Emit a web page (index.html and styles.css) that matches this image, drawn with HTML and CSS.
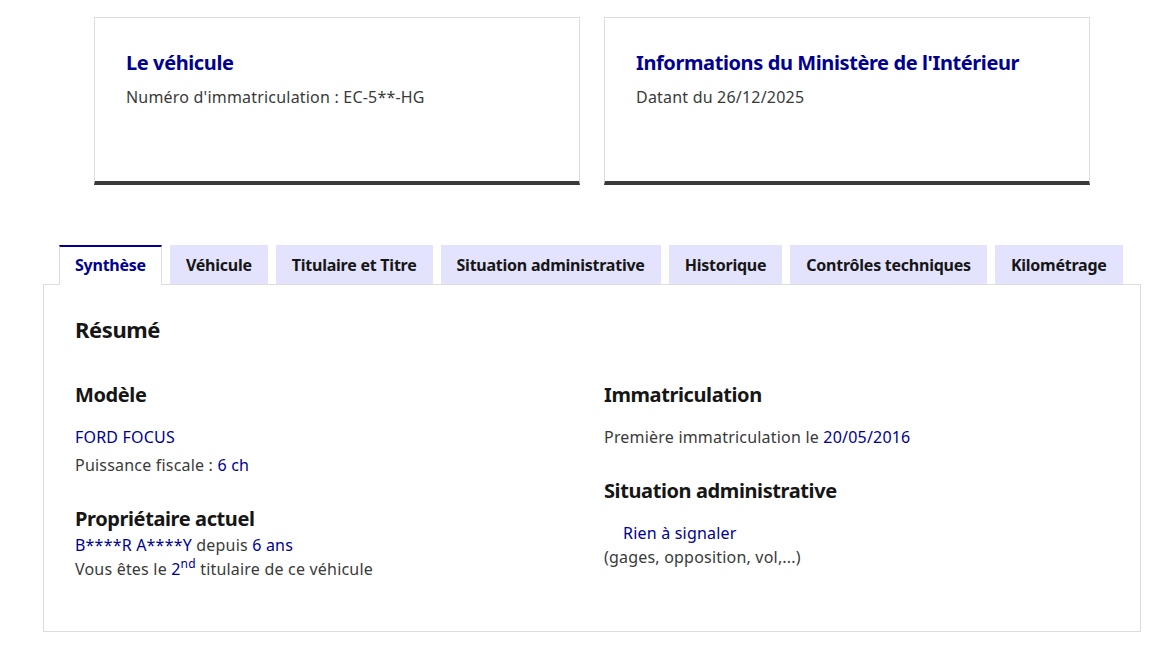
FILE: index.html
```html
<!DOCTYPE html>
<html lang="fr">
<head>
<meta charset="utf-8">
<title>Historique du véhicule</title>
<link rel="stylesheet" href="styles.css">
</head>
<body>
<main class="page">
  <section class="cards">
    <article class="card">
      <h2 class="card-title">Le véhicule</h2>
      <p class="card-text">Numéro d'immatriculation : EC-5**-HG</p>
    </article>
    <article class="card">
      <h2 class="card-title">Informations du Ministère de l'Intérieur</h2>
      <p class="card-text">Datant du 26/12/2025</p>
    </article>
  </section>

  <section class="tabs">
    <ul class="tab-list">
      <li class="tab tab-selected">Synthèse</li>
      <li class="tab">Véhicule</li>
      <li class="tab">Titulaire et Titre</li>
      <li class="tab">Situation administrative</li>
      <li class="tab">Historique</li>
      <li class="tab">Contrôles techniques</li>
      <li class="tab">Kilométrage</li>
    </ul>
    <div class="panel">
      <h2 class="panel-title">Résumé</h2>
      <div class="grid">
        <div class="col">
          <h3 class="h3">Modèle</h3>
          <p class="line blue first">FORD FOCUS</p>
          <p class="line">Puissance fiscale : <span class="blue">6 ch</span></p>
          <h3 class="h3 h3-gap">Propriétaire actuel</h3>
          <p class="line-24"><span class="blue">B****R A****Y</span> depuis <span class="blue">6 ans</span></p>
          <p class="line-24">Vous êtes le <span class="blue">2<sup class="sup">nd</sup></span> titulaire de ce véhicule</p>
        </div>
        <div class="col">
          <h3 class="h3">Immatriculation</h3>
          <p class="line first">Première immatriculation le <span class="blue">20/05/2016</span></p>
          <h3 class="h3 h3-gap">Situation administrative</h3>
          <p class="line-24 blue indent first">Rien à signaler</p>
          <p class="line-24">(gages, opposition, vol,...)</p>
        </div>
      </div>
    </div>
  </section>
</main>
</body>
</html>
```

FILE: styles.css
```css
* { box-sizing: border-box; }
html, body { margin: 0; padding: 0; background: #fff; }
body {
  font-family: "Noto Sans", "Open Sans", sans-serif;
  color: #3a3a3a;
  font-size: 16px;
  line-height: 24px;
  letter-spacing: 0.2px;
}
.page { padding-top: 17px; }
h2, h3, p, ul { margin: 0; padding: 0; }
h2, h3 { letter-spacing: -0.4px; }

.cards {
  display: flex;
  gap: 24px;
  margin-left: 94px;
  width: 996px;
}
.card {
  flex: 1;
  height: 168px;
  border: 1px solid #dddddd;
  border-bottom: 4px solid #3a3a3a;
  padding: 31px 31px 0;
}
.card-title {
  font-size: 20px;
  line-height: 28px;
  font-weight: 700;
  color: #000091;
}
.card-text { margin-top: 8px; color: #3a3a3a; }

.tabs {
  margin-top: 60px;
  margin-left: 43px;
  width: 1098px;
}
.tab-list {
  list-style: none;
  display: flex;
  gap: 8px;
  padding-left: 16px;
  position: relative;
  z-index: 1;
}
.tab {
  background: #e3e3fd;
  color: #161616;
  font-weight: 700;
  letter-spacing: -0.24px;
  white-space: nowrap;
  padding: 8px 16px 7px;
  line-height: 24px;
  height: 39px;
}
.tab-selected {
  background: #fff;
  color: #000091;
  border-top: 2px solid #000091;
  border-left: 1px solid #dddddd;
  border-right: 1px solid #dddddd;
  padding: 6px 15px 8px;
  height: 40px;
  margin-bottom: -1px;
}
.panel {
  border: 1px solid #dddddd;
  padding: 30px 31px 0;
  height: 348px;
}
.panel-title {
  font-size: 22px;
  line-height: 28px;
  font-weight: 700;
  color: #161616;
}
.grid {
  display: grid;
  grid-template-columns: 1fr 1fr;
  column-gap: 24px;
  margin-top: 38px;
}
.h3 {
  font-size: 20px;
  line-height: 28px;
  font-weight: 700;
  color: #161616;
}
.h3-gap { margin-top: 26px; }
.line { line-height: 28px; }
.first { margin-top: 14px; }
.h3 + .line-24.first { margin-top: 16px; }
.line-24 { line-height: 24px; }
.blue { color: #000091; }
.indent { padding-left: 19px; }
.sup { font-size: 12px; line-height: 0; vertical-align: 7px; }
```
